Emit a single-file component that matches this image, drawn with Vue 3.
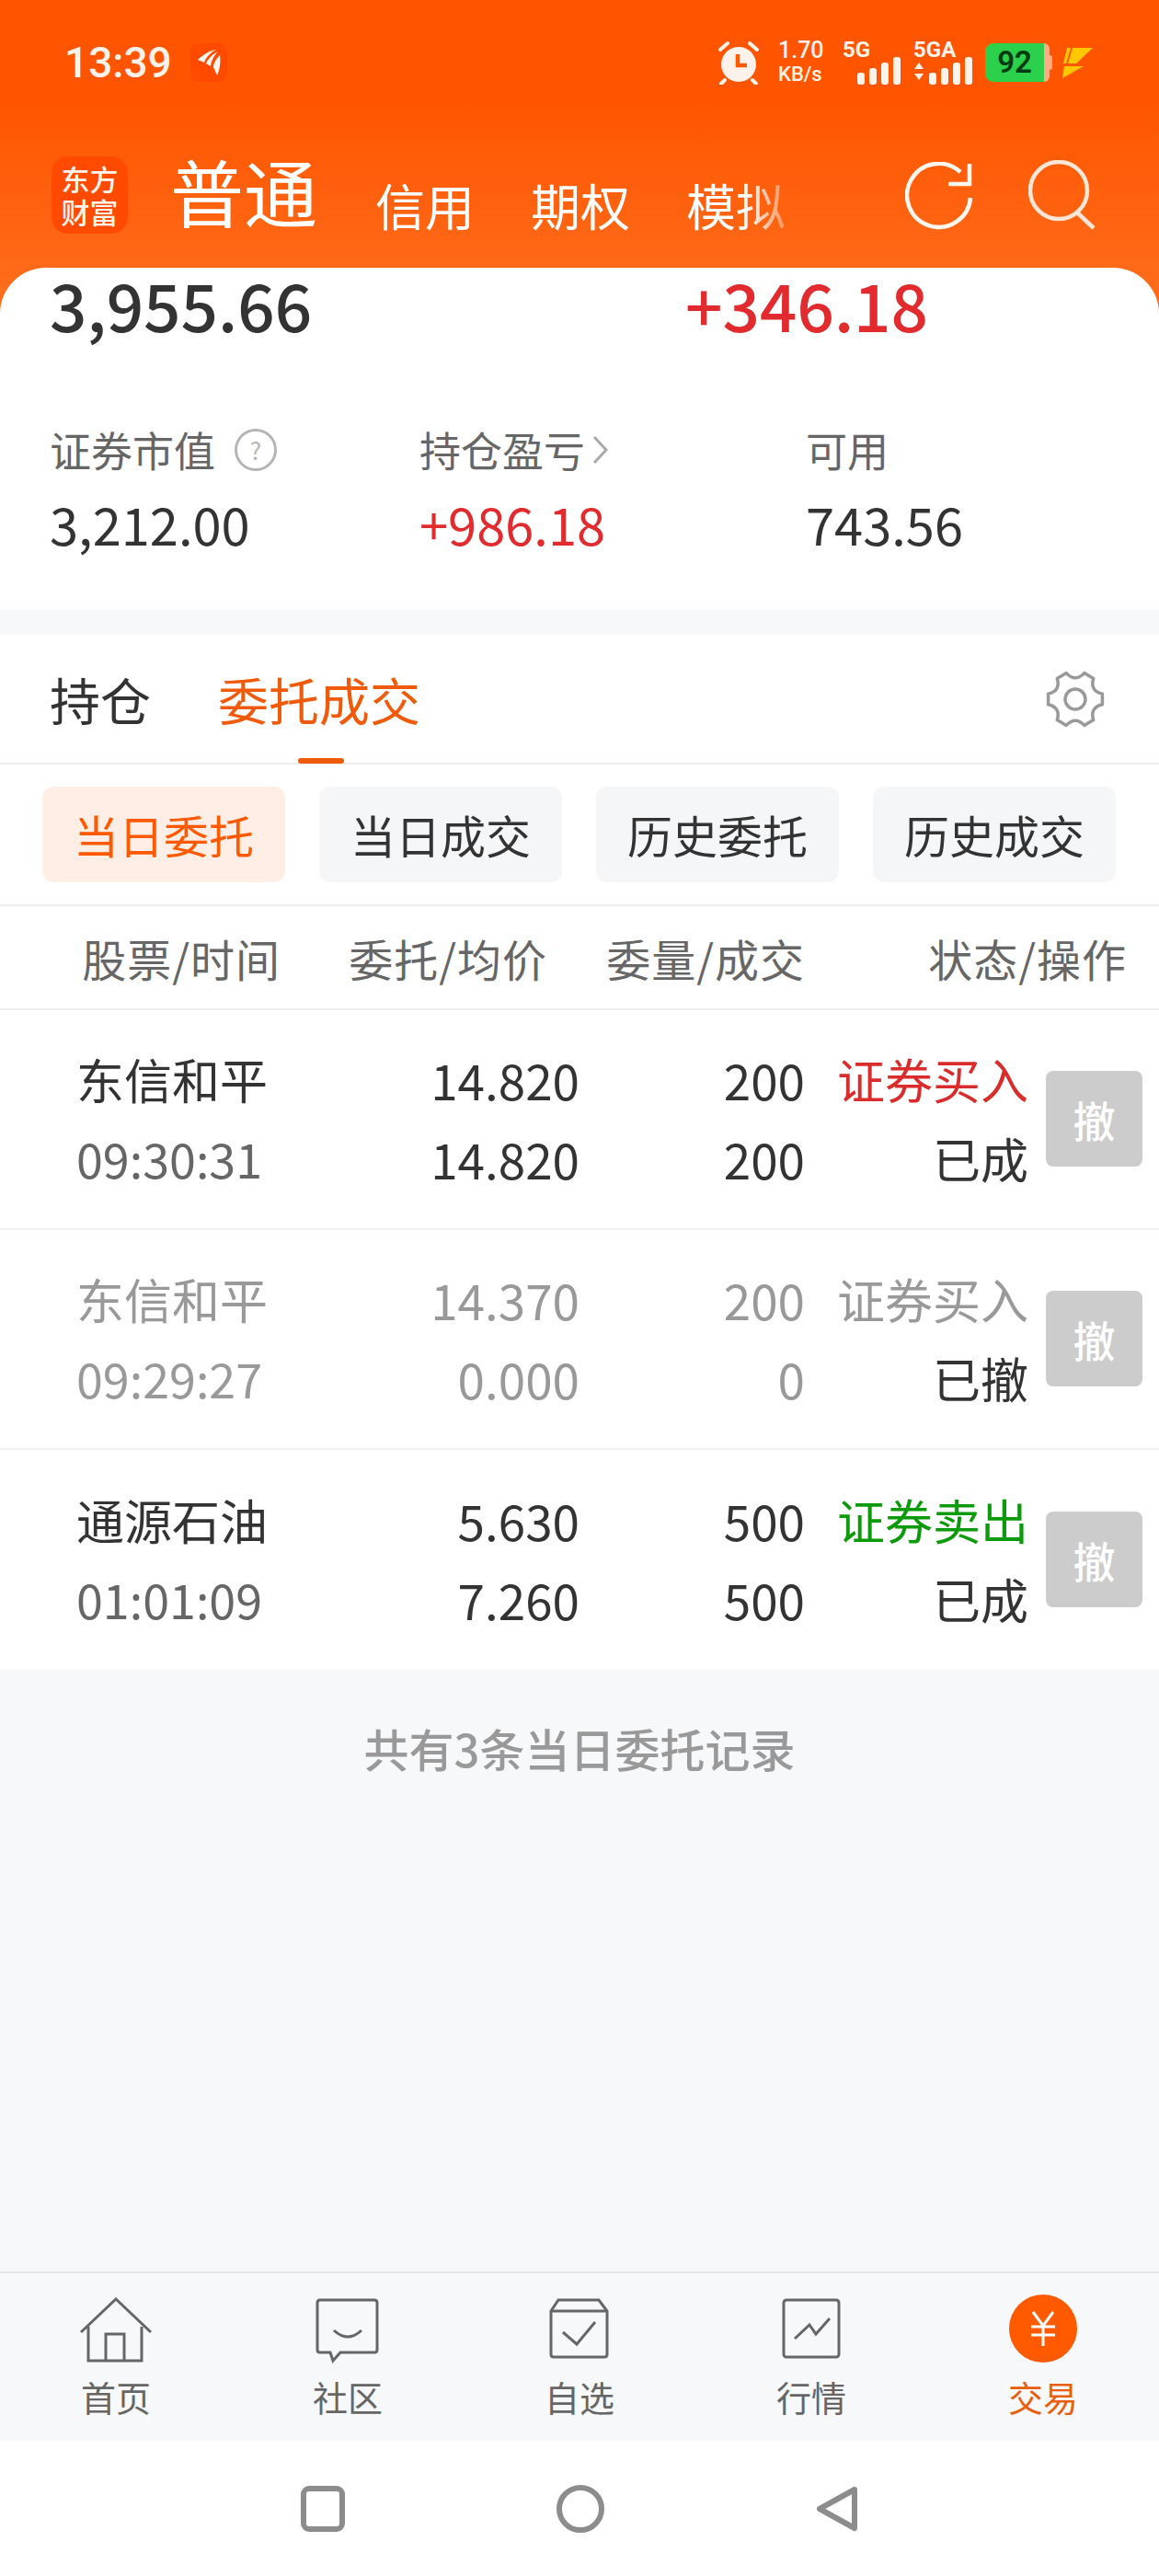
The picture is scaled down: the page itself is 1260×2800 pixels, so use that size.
<template>
  <div class="page">
    <div class="hero">
      <div class="status">
        <span class="clock">13:39</span>
        <span class="notif">
          <svg width="26" height="30" viewBox="0 0 26 30"><path d="M21 1C14 2 7 6 1 12l7 3c2-6 7-11 13-14zM23 3c-6 3-11 8-13 13l5 3c1-7 4-12 8-16zM25 7c-4 4-7 9-7 13l4 9c3-6 4-15 3-22z" fill="#fff6ef"/></svg>
        </span>
        <span class="status-right">
          <svg class="alarm" width="46" height="48" viewBox="0 0 46 48">
            <circle cx="23" cy="26" r="19" fill="#fff2ea"/>
            <path d="M3 10l8-7M43 10l-8-7M8 43l-4 4M38 43l4 4" stroke="#fff2ea" stroke-width="4" fill="none" stroke-linecap="round"/>
            <path d="M22 15v12h10" stroke="#ff5a00" stroke-width="4.5" fill="none"/>
          </svg>
          <span class="speed"><b>1.70</b><b>KB/s</b></span>
          <span class="sig sig-a">
            <b>5G</b>
            <svg width="48" height="30" viewBox="0 0 48 30"><rect x="0" y="17" width="8" height="13" rx="3"/><rect x="13" y="12" width="8" height="18" rx="3"/><rect x="26" y="6" width="8" height="24" rx="3"/><rect x="39" y="0" width="8" height="30" rx="3"/></svg>
          </span>
          <span class="sig sig-b">
            <b>5GA</b>
            <svg width="64" height="30" viewBox="0 0 64 30"><path d="M1 13l5-7 5 7zM1 18h10l-5 7z"/><rect x="17" y="17" width="8" height="13" rx="3"/><rect x="30" y="12" width="8" height="18" rx="3"/><rect x="43" y="6" width="8" height="24" rx="3"/><rect x="56" y="0" width="8" height="30" rx="3"/></svg>
          </span>
          <span class="battery"><span class="batt-body">92</span><span class="batt-cap"></span><span class="batt-nub"></span></span>
          <svg class="bolt" width="36" height="36" viewBox="0 0 36 36" fill="#ffc800"><path d="M6 2h4L5 19H2zM12 2h22L16 19H7zM3 22h21L1 35z"/></svg>
        </span>
      </div>

      <div class="topnav">
        <div class="logo"><span>东方</span><span>财富</span></div>
        <span class="main-tab">普通</span>
        <span class="sub-tab">信用</span>
        <span class="sub-tab">期权</span>
        <span class="sub-tab fade">模拟</span>
        <svg class="refresh" width="74" height="74" viewBox="0 0 74 74" fill="none" stroke="#fff6ef" stroke-width="4.5">
          <path d="M71 39A34.500 34.500 0 1 1 60 11"/>
          <path d="M70 2V24H47"/>
        </svg>
        <svg class="search" width="74" height="76" viewBox="0 0 74 76" fill="none" stroke="#ffe6d6" stroke-width="4.500">
          <circle cx="33" cy="33" r="31"/>
          <path d="M53 57l18 17"/>
        </svg>
      </div>

      <div class="card">
        <div class="big-row">
          <span class="big">3,955.66</span>
          <span class="big red">+346.18</span>
        </div>
        <div class="stats">
          <div>
            <div class="stat-label">证券市值
              <span class="help">?</span>
            </div>
            <div class="stat-val">3,212.00</div>
          </div>
          <div>
            <div class="stat-label">持仓盈亏
              <svg class="chev" width="20" height="34" viewBox="0 0 20 34"><path d="M3 3l13 14L3 31" fill="none" stroke="#aaa" stroke-width="3"/></svg>
            </div>
            <div class="stat-val red">+986.18</div>
          </div>
          <div>
            <div class="stat-label">可用</div>
            <div class="stat-val">743.56</div>
          </div>
        </div>
      </div>
    </div>

    <div class="tabs">
      <span class="tab">持仓</span>
      <span class="tab active">委托成交</span>
      <svg class="gear" width="66" height="62" viewBox="0 0 66 62" fill="none" stroke="#999" stroke-width="3.500" stroke-linejoin="round">
        <path :d="gearPath"/>
        <circle cx="33" cy="31" r="11"/>
      </svg>
    </div>

    <div class="filters">
      <span v-for="(f, i) in filters" :key="f" class="filter" :class="{ on: i === 0 }">{{ f }}</span>
    </div>

    <div class="thead">
      <span class="h1">股票/时间</span>
      <span class="h2">委托/均价</span>
      <span>委量/成交</span>
      <span class="h4">状态/操作</span>
    </div>

    <div class="rows">
      <div v-for="o in orders" :key="o.time" class="row" :class="{ dim: o.dim }">
        <div class="cell">
          <span class="name">{{ o.name }}</span>
          <span class="time">{{ o.time }}</span>
        </div>
        <div class="cell right num">
          <span>{{ o.price }}</span>
          <span>{{ o.avg }}</span>
        </div>
        <div class="cell right num">
          <span>{{ o.qty }}</span>
          <span>{{ o.done }}</span>
        </div>
        <div class="cell right">
          <span :class="o.side">{{ o.action }}</span>
          <span class="state">{{ o.state }}</span>
        </div>
        <span class="cancel">撤</span>
      </div>
    </div>

    <div class="rest">共有3条当日委托记录</div>

    <div class="bottom">
      <div class="bottom-item">
        <svg width="80" height="72" viewBox="0 0 80 72" fill="none" stroke="#666" stroke-width="3">
          <path d="M2 38L40 2l38 36"/>
          <path d="M10 32v37h58V32"/>
          <path d="M29 69V40h20v29"/>
        </svg>
        <span>首页</span>
      </div>
      <div class="bottom-item">
        <svg width="80" height="72" viewBox="0 0 80 72" fill="none" stroke="#666" stroke-width="3">
          <path d="M10 3q-3 0-3 3v51q0 3 3 3h11l3 9 8-9h37q3 0 3-3V6q0-3-3-3z"/>
          <path d="M25 36q15 14 30 0"/>
        </svg>
        <span>社区</span>
      </div>
      <div class="bottom-item">
        <svg width="80" height="72" viewBox="0 0 80 72" fill="none" stroke="#666" stroke-width="3">
          <path d="M17 3h44l9 12v47q0 3-3 3H12q-3 0-3-3V15z"/>
          <path d="M9 15h61"/>
          <path d="M22 38l15 13 20-24"/>
        </svg>
        <span>自选</span>
      </div>
      <div class="bottom-item">
        <svg width="80" height="72" viewBox="0 0 80 72" fill="none" stroke="#666" stroke-width="3">
          <rect x="10" y="3" width="60" height="62" rx="3"/>
          <path d="M22 45l16-15 7 10 15-17"/>
        </svg>
        <span>行情</span>
      </div>
      <div class="bottom-item on">
        <span class="coin">
          <svg width="30" height="38" viewBox="0 0 30 38" fill="none" stroke="#fff" stroke-width="3"><path d="M4 1l11 15L26 1M2 17h26M2 26h26M15 16v22"/></svg>
        </span>
        <span>交易</span>
      </div>
    </div>

    <div class="sysnav">
      <svg width="48" height="50" viewBox="0 0 48 50" fill="none" stroke="#8c8c8c" stroke-width="6"><rect x="3" y="3" width="42" height="44" rx="6"/></svg>
      <svg width="52" height="52" viewBox="0 0 52 52" fill="none" stroke="#8c8c8c" stroke-width="6"><circle cx="26" cy="26" r="23"/></svg>
      <svg width="46" height="50" viewBox="0 0 46 50" fill="none" stroke="#8c8c8c" stroke-width="6" stroke-linejoin="round"><path d="M42 4L4 25l38 21z"/></svg>
    </div>
  </div>
</template>

<script setup>
const filters = ['当日委托', '当日成交', '历史委托', '历史成交']

const orders = [
  { name: '东信和平', time: '09:30:31', price: '14.820', avg: '14.820', qty: '200', done: '200', action: '证券买入', side: 'buy', state: '已成' },
  { name: '东信和平', time: '09:29:27', price: '14.370', avg: '0.000', qty: '200', done: '0', action: '证券买入', side: '', state: '已撤', dim: true },
  { name: '通源石油', time: '01:01:09', price: '5.630', avg: '7.260', qty: '500', done: '500', action: '证券卖出', side: 'sell', state: '已成' }
]

// gear outline: six flat lobes joined by curved notches
const polar = (deg, r) => (33 + r * Math.cos(deg * Math.PI / 180)).toFixed(1) + ' ' + (31 + r * Math.sin(deg * Math.PI / 180)).toFixed(1)
const gearPath = (() => {
  let d = ''
  for (let i = 0; i < 6; i++) {
    const th = i * 60
    d += (i === 0 ? 'M' : 'L') + polar(th - 11, 30) + ' L' + polar(th + 11, 30)
    d += ' Q' + polar(th + 30, 18) + ' ' + polar(th + 49, 30) + ' '
  }
  return d + 'Z'
})()
</script>

<style scoped>
.page {
  width: 1260px;
  height: 2800px;
  display: flex;
  flex-direction: column;
  overflow: hidden;
  background: #f7f8fa;
  font-family: "Noto Sans CJK SC", "Noto Sans", sans-serif;
  color: #333;
}

.hero {
  background: linear-gradient(#ff5500 0, #ff5500 110px, #ff6f1e 341px) no-repeat;
  background-size: 100% 341px;
}

.status {
  height: 136px;
  display: flex;
  align-items: center;
  padding: 0 70px;
  color: #fff2ea;
  box-sizing: border-box;
}
.clock {
  font: 500 46px "Roboto", sans-serif;
}
.notif {
  margin-left: 20px;
  width: 40px;
  height: 42px;
  background: #ff4a00;
  border-radius: 9px;
  display: flex;
  align-items: center;
  justify-content: center;
}
.status-right {
  margin-left: auto;
  display: flex;
  align-items: center;
  height: 50px;
}
.speed {
  margin-left: 20px;
  width: 50px;
  display: flex;
  flex-direction: column;
  font: 500 22px/26px "Roboto", sans-serif;
  white-space: nowrap;
}
.speed b { font-weight: 500; }
.speed b:first-child { font-size: 25px; }
.sig {
  position: relative;
  height: 44px;
  display: block;
}
.sig b {
  position: absolute;
  left: 0;
  top: -4px;
  font: 700 24px/24px "Roboto", sans-serif;
}
.sig svg {
  position: absolute;
  right: 0;
  bottom: -2px;
  fill: #fff2ea;
}
.sig-a { width: 64px; margin-left: 20px; }
.sig-b { width: 64px; margin-left: 13px; }
.battery {
  margin-left: 14px;
  display: flex;
  align-items: center;
}
.batt-body {
  width: 64px;
  height: 42px;
  background: #2bd14b;
  border-radius: 9px 0 0 9px;
  color: #053b12;
  font: 600 33px/42px "Roboto", sans-serif;
  text-align: center;
}
.batt-cap {
  width: 6px;
  height: 42px;
  background: #ffab84;
  border-radius: 0 8px 8px 0;
}
.batt-nub {
  width: 3px;
  height: 16px;
  background: #ffab84;
  border-radius: 0 3px 3px 0;
}
.bolt { margin-left: 10px; }

.topnav {
  height: 155px;
  display: flex;
  align-items: flex-end;
  padding: 0 0 39px 56px;
  color: #fff;
  box-sizing: border-box;
  position: relative;
}
.logo {
  width: 83px;
  height: 84px;
  margin-bottom: -2px;
  background: #ff4a00;
  border-radius: 18px;
  color: #fff3ec;
  font-size: 31px;
  font-weight: 500;
  line-height: 36px;
  display: flex;
  flex-direction: column;
  align-items: center;
  justify-content: center;
}
.main-tab {
  margin-left: 46px;
  font-size: 80px;
  line-height: 92px;
  width: 223px;
}
.sub-tab {
  font-size: 54px;
  line-height: 74px;
  width: 169px;
  margin-bottom: -8px;
  white-space: nowrap;
}
.fade {
  background: linear-gradient(90deg, #fff 60%, rgba(255, 255, 255, 0.35) 100%);
  width: 106px;
  -webkit-background-clip: text;
  background-clip: text;
  color: transparent;
}
.refresh {
  position: absolute;
  left: 984px;
  top: 40px;
}
.search {
  position: absolute;
  left: 1118px;
  top: 38px;
}

.card {
  background: #fff;
  border-radius: 50px 50px 0 0;
  height: 371px;
  box-sizing: border-box;
  padding-left: 54px;
}
.big-row {
  display: grid;
  grid-template-columns: 691px 1fr;
  height: 78px;
  align-items: center;
}
.big {
  font-size: 71px;
  line-height: 78px;
  font-weight: 500;
}
.red { color: #e22b2f; }
.stats {
  margin-top: 85px;
  display: grid;
  grid-template-columns: 402px 420px 1fr;
}
.stat-label {
  height: 70px;
  font-size: 45px;
  line-height: 70px;
  color: #666;
  display: flex;
  align-items: center;
  gap: 21px;
}
.help {
  width: 46px;
  height: 46px;
  box-sizing: border-box;
  border: 3.500px solid #b5b5b5;
  border-radius: 50%;
  color: #b5b5b5;
  font-size: 26px;
  line-height: 39px;
  text-align: center;
}
.chev { flex-shrink: 0; margin-left: -14px; }
.stat-val {
  margin-top: 9px;
  font-size: 56px;
  line-height: 72px;
}

.tabs {
  margin-top: 28px;
  height: 141px;
  background: #fff;
  border-bottom: 2px solid #eee;
  display: flex;
  align-items: center;
  padding-left: 54px;
  gap: 73px;
  position: relative;
  box-sizing: border-box;
}
.tab {
  font-size: 55px;
  position: relative;
  height: 141px;
  line-height: 141px;
}
.tab.active { color: #ef5a0b; }
.tab.active::after {
  content: "";
  position: absolute;
  left: 87px;
  bottom: 0;
  width: 50px;
  height: 6px;
  background: #ef5a0b;
  border-radius: 3px;
}
.gear {
  position: absolute;
  left: 1136px;
  top: 39px;
}

.filters {
  background: #fff;
  height: 154px;
  border-bottom: 2px solid #eee;
  display: flex;
  gap: 37px;
  padding: 24px 46px 0;
  box-sizing: border-box;
}
.filter {
  width: 264px;
  height: 104px;
  background: #f5f6f8;
  border-radius: 12px;
  font-size: 49px;
  line-height: 104px;
  text-align: center;
}
.filter.on {
  background: #ffeee6;
  color: #ff5a00;
}

.thead {
  background: #fff;
  height: 113px;
  border-bottom: 2px solid #eee;
  display: flex;
  align-items: center;
  font-size: 48px;
  letter-spacing: 1px;
  color: #666;
  box-sizing: border-box;
  white-space: nowrap;
}
.thead span { width: 280px; text-align: right; }
.thead .h1 { width: 305px; }
.thead .h2 { width: 290px; }
.thead .h4 { width: 350px; }

.row {
  background: #fff;
  height: 239px;
  border-bottom: 2px solid #f2f2f2;
  display: grid;
  grid-template-columns: 300px 247px 245px 243px 124px;
  padding: 0 0 2px 83px;
  align-items: center;
  box-sizing: border-box;
  font-size: 52px;
}
.row:last-child { border-bottom: 0; }
.cell {
  display: flex;
  flex-direction: column;
  line-height: 86px;
  white-space: nowrap;
}
.right { align-items: flex-end; }
.num { font-size: 53px; }
.time { color: #666; }
.dim { color: #999; }
.dim .time { color: #999; }
.state { color: #333; }
.buy { color: #db2c2c; }
.sell { color: #0a9a0a; }
.cancel {
  justify-self: end;
  width: 105px;
  height: 104px;
  background: #ccc;
  border-radius: 8px;
  color: #fff;
  font-size: 46px;
  font-weight: 500;
  line-height: 104px;
  text-align: center;
}

.rest {
  flex: 1;
  padding-top: 52px;
  font-size: 49px;
  line-height: 66px;
  font-weight: 500;
  color: #999;
  text-align: center;
}

.bottom {
  height: 184px;
  border-top: 2px solid #e6e6e8;
  display: grid;
  grid-template-columns: repeat(5, 252px);
  box-sizing: border-box;
}
.bottom-item {
  display: flex;
  flex-direction: column;
  align-items: center;
  padding-top: 26px;
  font-size: 38px;
  color: #666;
}
.bottom-item span:last-child {
  margin-top: 11px;
  line-height: 50px;
}
.bottom-item.on span:last-child { color: #e8600f; margin-top: 12px; }
.coin {
  width: 74px;
  height: 74px;
  margin-top: -3px;
  border-radius: 50%;
  background: #ff5a00;
  display: flex;
  align-items: center;
  justify-content: center;
}

.sysnav {
  height: 147px;
  background: #fff;
  display: flex;
  align-items: center;
  justify-content: center;
  gap: 230px;
}
</style>
